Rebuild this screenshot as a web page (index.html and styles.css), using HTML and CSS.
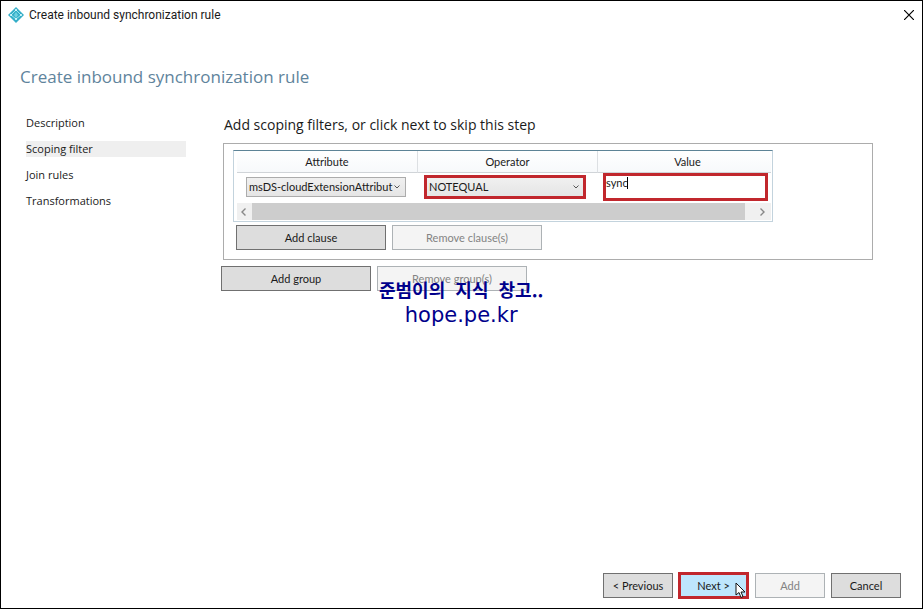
FILE: index.html
```html
<!DOCTYPE html>
<html lang="en">
<head>
<meta charset="utf-8">
<title>Create inbound synchronization rule</title>
<link rel="stylesheet" href="styles.css">
</head>
<body>
<div class="window">
  <header class="titlebar">
    <svg class="app-icon" viewBox="0 0 16 16" aria-hidden="true">
      <path d="M8 0 L16 8 L8 16 L0 8 Z" fill="#35aec8"/>
      <path d="M8 3 L13 8 L8 12 L3 8 Z" fill="none" stroke="#9be4ee" stroke-width="1"/>
      <path d="M8 5 L10 8 L8 11 L6 8 Z" fill="#6fd0e0"/>
      <circle cx="8" cy="3" r="1" fill="#e4fbff"/><circle cx="3" cy="8" r="1" fill="#e4fbff"/>
      <circle cx="13" cy="8" r="1" fill="#e4fbff"/><circle cx="8" cy="12" r="1" fill="#e4fbff"/>
    </svg>
    <span class="titlebar-text">Create inbound synchronization rule</span>
    <button class="close" type="button" aria-label="Close">
      <svg viewBox="0 0 10 10" aria-hidden="true"><path d="M0 0 L10 10 M10 0 L0 10" fill="none" stroke="#000" stroke-width="1.2"/></svg>
    </button>
  </header>

  <h1 class="page-title">Create inbound synchronization rule</h1>

  <div class="body">
    <nav class="steps">
      <a class="step" href="#">Description</a>
      <a class="step step-current" href="#" aria-current="step">Scoping filter</a>
      <a class="step" href="#">Join rules</a>
      <a class="step" href="#">Transformations</a>
    </nav>

    <main class="content">
      <h2 class="content-title">Add scoping filters, or click next to skip this step</h2>
      <section class="group">
        <div class="grid">
          <div class="grid-view">
            <table class="clauses">
              <thead>
                <tr><th scope="col">Attribute</th><th scope="col">Operator</th><th scope="col">Value</th></tr>
              </thead>
              <tbody>
                <tr>
                  <td>
                    <div class="combo combo-attribute">
                      <select aria-label="Attribute"><option>msDS-cloudExtensionAttribut</option></select>
                      <svg class="chevron" viewBox="0 0 6 4" aria-hidden="true"><path d="M0.5 0.5 L3 3 L5.500 0.5" fill="none" stroke="#555"/></svg>
                    </div>
                  </td>
                  <td>
                    <div class="combo marked">
                      <select aria-label="Operator"><option>NOTEQUAL</option></select>
                      <svg class="chevron" viewBox="0 0 6 4" aria-hidden="true"><path d="M0.5 0.5 L3 3 L5.500 0.5" fill="none" stroke="#555"/></svg>
                    </div>
                  </td>
                  <td>
                    <div class="value marked">
                      <input type="text" aria-label="Value" value="sync">
                      <span class="caret"></span>
                    </div>
                  </td>
                </tr>
              </tbody>
            </table>
          </div>
          <div class="scrollbar" aria-hidden="true">
            <svg class="arrow" viewBox="0 0 5 8"><path d="M4.500 0.5 L1 4 L4.500 7.500" fill="none" stroke="#888" stroke-width="1.4"/></svg>
            <span class="thumb"></span>
            <svg class="arrow arrow-end" viewBox="0 0 5 8"><path d="M0.5 0.5 L4 4 L0.5 7.500" fill="none" stroke="#888" stroke-width="1.4"/></svg>
          </div>
        </div>
        <div class="actions">
          <button class="btn btn-wide" type="button">Add clause</button>
          <button class="btn btn-wide" type="button" disabled>Remove clause(s)</button>
        </div>
      </section>
      <div class="actions actions-group">
        <button class="btn btn-wide" type="button">Add group</button>
        <button class="btn btn-wide" type="button" disabled>Remove group(s)</button>
        <div class="watermark" lang="ko"><span class="watermark-name">준범이의&nbsp; 지식&nbsp; 창고..</span><span class="watermark-site">hope.pe.kr</span></div>
      </div>
    </main>
  </div>

  <footer class="footer">
    <button class="btn" type="button">&lt; Previous</button>
    <div class="next">
      <button class="btn btn-next" type="button">Next &gt;</button>
      <svg class="pointer" viewBox="0 0 11 17" aria-hidden="true"><path d="M1 1 V13 L4 10.500 L6 15.500 L8 14.500 L6 10 H10 Z" fill="#fff" stroke="#111"/></svg>
    </div>
    <button class="btn" type="button" disabled>Add</button>
    <button class="btn" type="button">Cancel</button>
  </footer>
</div>
</body>
</html>
```

FILE: styles.css
```css
* { box-sizing: border-box; }

body {
  margin: 0;
  background: #fff;
  color: #1a1a1a;
  font: 11px/16px "Open Sans", "Noto Sans", "Noto Sans CJK KR", sans-serif;
}

button, select, input { font: inherit; color: inherit; margin: 0; }

.window {
  display: flex;
  flex-direction: column;
  min-height: 100vh;
  border: 1px solid #000;
}

.titlebar {
  display: flex;
  align-items: center;
  height: 28px;
  padding: 0 8px 0 7px;
}
.app-icon { width: 16px; height: 16px; margin-right: 5px; }
.titlebar-text { flex: 1; font-family: Roboto, sans-serif; font-size: 12px; }
.close {
  display: flex;
  padding: 0;
  border: 0;
  background: none;
}
.close svg { width: 10px; height: 10px; }

.page-title {
  margin: 35px 0 0 19px;
  color: #5f849c;
  font-size: 17px;
  font-weight: 400;
  line-height: 26px;
}

.body {
  display: flex;
  flex: 1;
  gap: 35px;
  padding: 25px 49px 0 25px;
}

.steps {
  display: flex;
  flex-direction: column;
  gap: 10px;
  width: 160px;
}
.step { color: inherit; text-decoration: none; }
.step-current { background: #efefef; }

.content { flex: 1; min-width: 0; }
.content-title {
  margin: 0 0 8px 3px;
  font-size: 14px;
  font-weight: 400;
  line-height: 20px;
}

.group {
  margin-left: 2px;
  padding: 6px 9px 9px;
  border: 1px solid #acacac;
}

.grid {
  max-width: 540px;
  padding: 0 1px 1px 3px;
  border: 1px solid #c3d3dd;
  border-top-color: #5d8396;
}
.grid-view { overflow: hidden; }

.clauses {
  width: 541px;
  table-layout: fixed;
  border-collapse: separate;
  border-spacing: 0;
  font-family: Lato, "Open Sans", sans-serif;
}
.clauses th {
  height: 22px;
  padding: 0;
  border-right: 1px solid #dde0e3;
  border-bottom: 1px solid #d0d4d8;
  background: linear-gradient(#fff, #f7f9fb);
  font-weight: 400;
}
.clauses th:first-child { width: 181px; }
.clauses td {
  height: 30px;
  padding: 0 6px 2px;
  vertical-align: middle;
}

.combo { position: relative; width: 162px; }
.combo-attribute { width: 160px; margin-left: 3px; }
.combo select {
  display: block;
  width: 100%;
  height: 20px;
  padding: 0 2px;
  border: 1px solid #acacac;
  border-radius: 0;
  background: linear-gradient(#f0f0f0, #e5e5e5);
  appearance: none;
}
.chevron {
  position: absolute;
  top: 8px;
  right: 6px;
  width: 6px;
  height: 4px;
}

.marked { border: 3px solid #c1272d; }
.combo.marked select { height: 18px; border: 0; }
.combo.marked .chevron { top: 7px; right: 4px; }

.value { position: relative; width: 165px; height: 28px; margin-left: -1px; }
.value input {
  display: block;
  width: 100%;
  height: 14px;
  padding: 0;
  border: 0;
  outline: 0;
  background: none;
}
.caret {
  position: absolute;
  top: 1px;
  left: 21px;
  width: 1px;
  height: 12px;
  background: #000;
}

.scrollbar {
  display: flex;
  align-items: center;
  height: 17px;
  background: #f0f0f0;
}
.arrow { width: 5px; height: 8px; margin: 0 6px 0 4px; }
.arrow-end { margin: 0 6px 0 15px; }
.thumb { flex: 1; height: 17px; background: #cdcdcd; }

.actions { display: flex; gap: 6px; padding: 3px 3px 0; }
.actions-group { position: relative; padding: 6px 0 0; }

.btn {
  width: 70px;
  height: 25px;
  padding: 0;
  border: 1px solid #707070;
  border-radius: 0;
  background: #ddd;
  font-family: Lato, "Open Sans", sans-serif;
  text-align: center;
}
.btn-wide { width: 150px; }
.btn:disabled {
  border-color: #adb2b5;
  background: #f4f4f4;
  color: #838383;
}

.watermark {
  position: absolute;
  top: 16px;
  left: 158px;
  display: flex;
  flex-direction: column;
  align-items: center;
  color: #00008b;
  font-size: 18px;
  line-height: 26px;
  white-space: nowrap;
}
.watermark-name { font-family: "Noto Sans CJK KR", sans-serif; font-weight: 700; }
.watermark-site { font-family: "DejaVu Sans", sans-serif; font-size: 21px; }

.footer {
  display: flex;
  align-items: center;
  justify-content: flex-end;
  gap: 6px;
  padding: 0 21px 9px 0;
}
.next { position: relative; margin-left: -1px; }
.btn-next {
  display: block;
  width: 71px;
  height: 27px;
  border: 3px solid #c1272d;
  background: #bee6fd;
}
.pointer {
  position: absolute;
  top: 10px;
  right: 3px;
  width: 11px;
  height: 17px;
}
```
